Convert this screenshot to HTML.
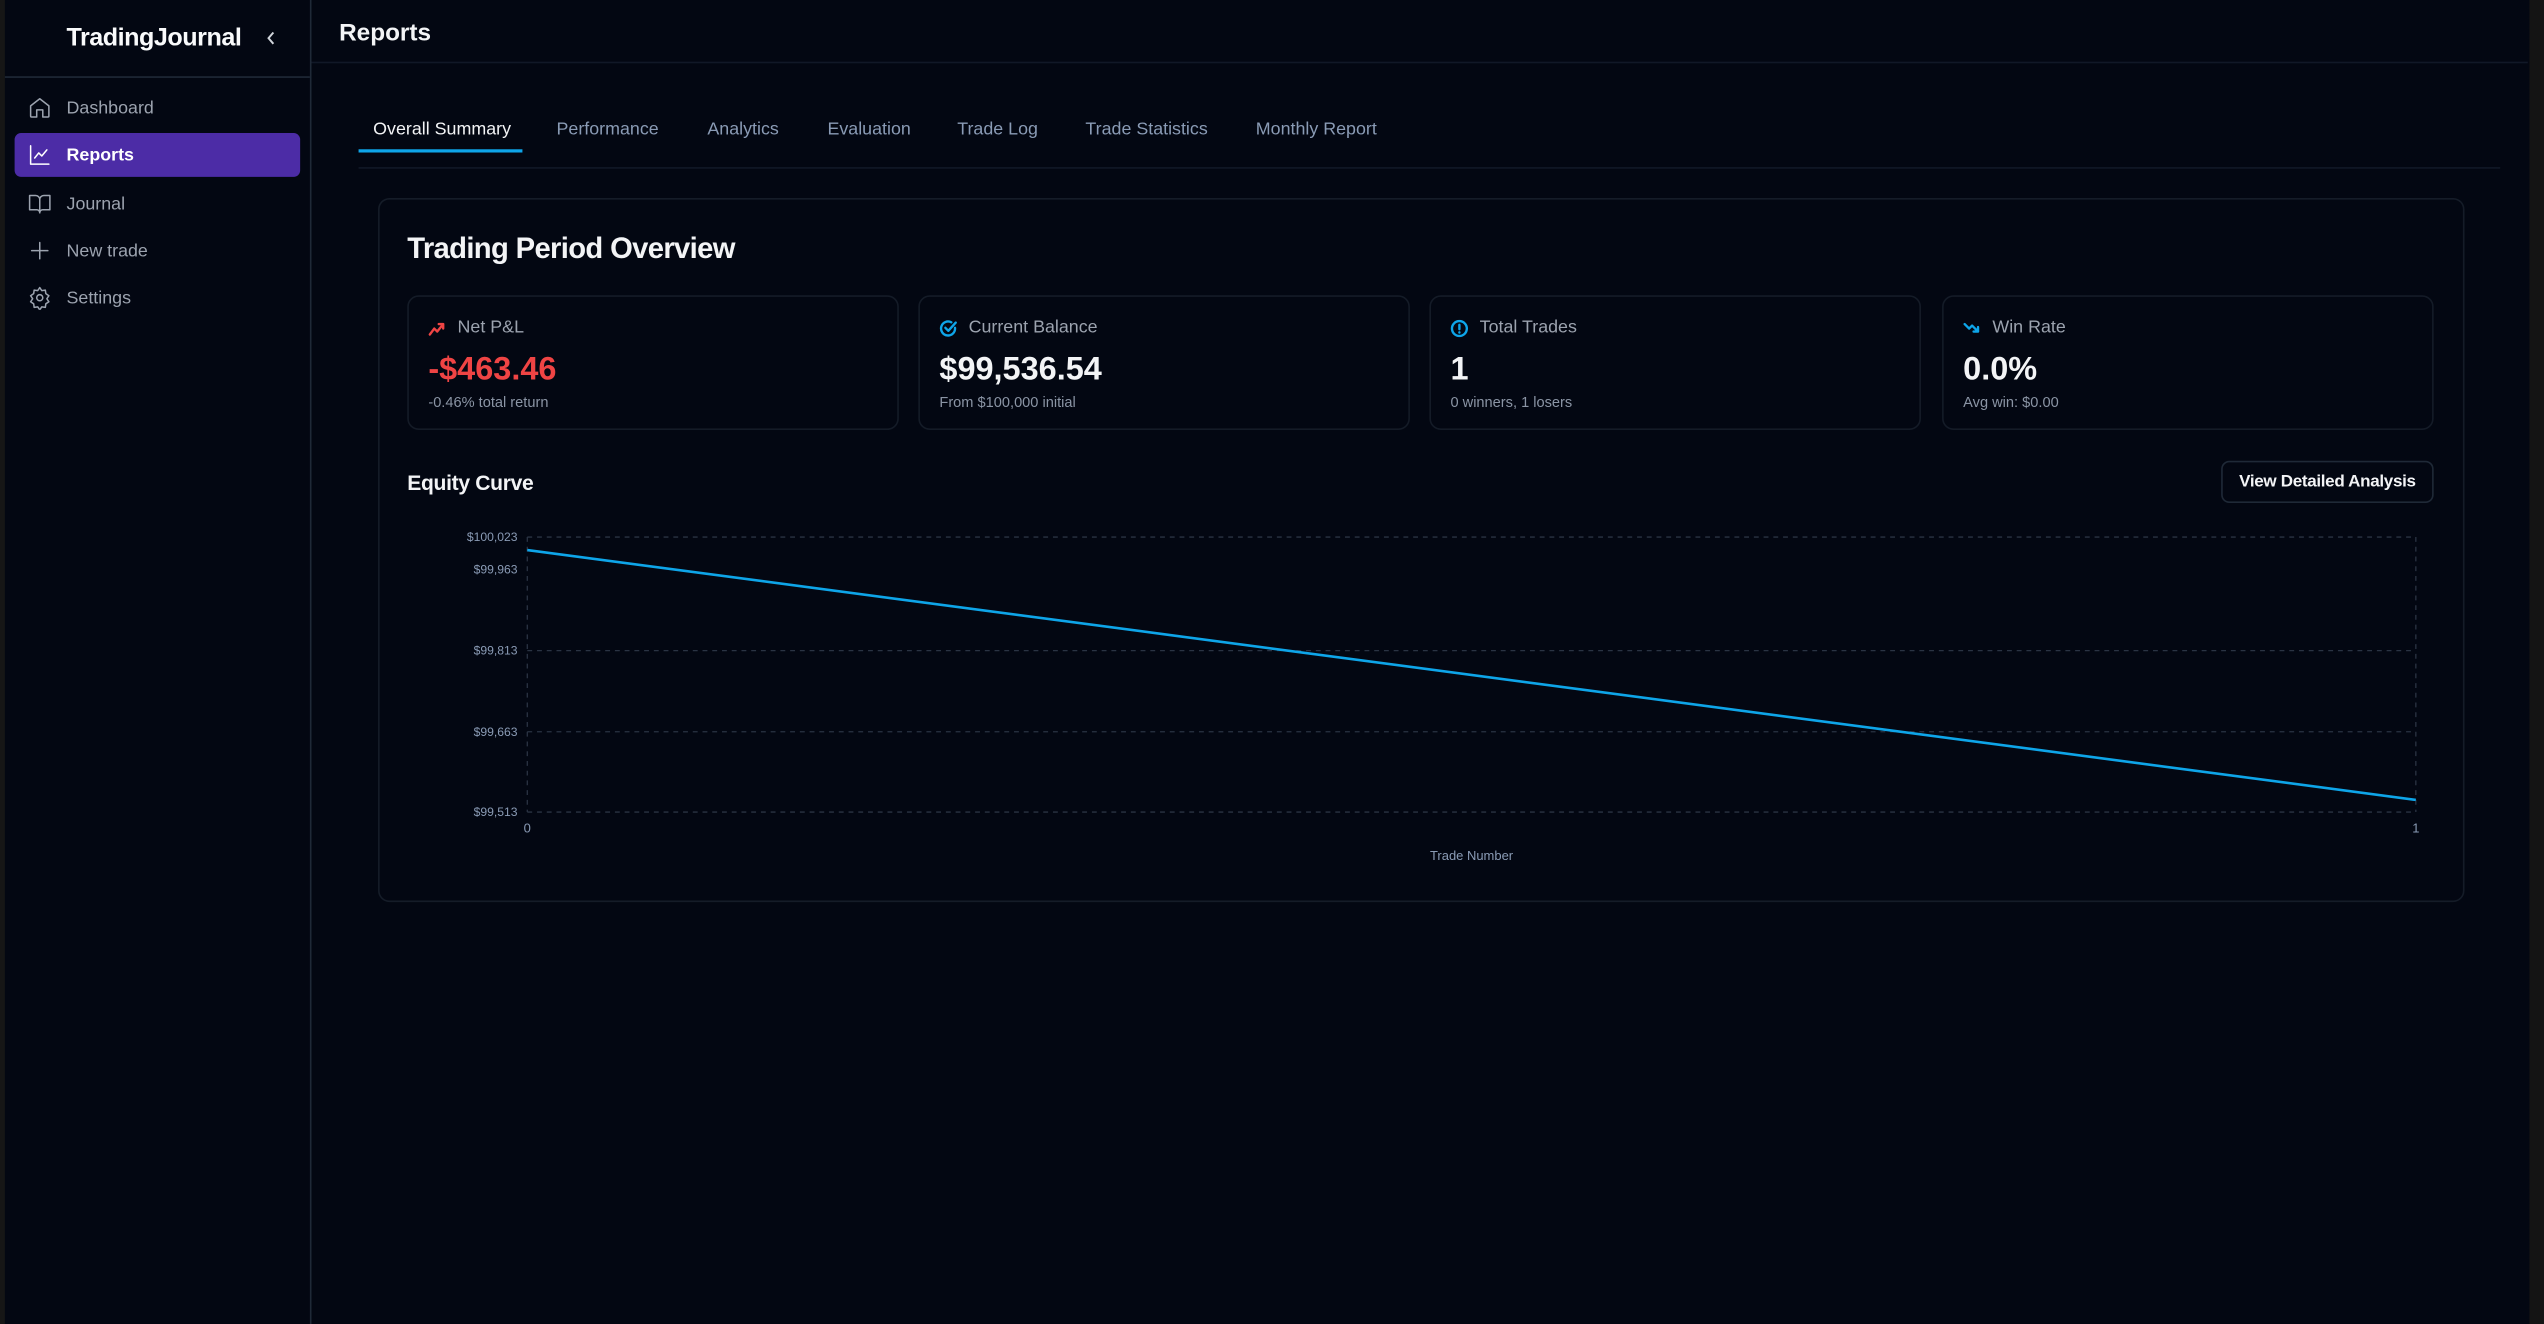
<!DOCTYPE html>
<html><head><meta charset="utf-8"><style>
*{box-sizing:border-box;margin:0;padding:0}
html,body{width:2544px;height:1324px;overflow:hidden;background:#030712}
#w{position:absolute;left:0;top:0;width:1568px;height:816px;transform:scale(1.62245,1.6225);transform-origin:0 0;font-family:"Liberation Sans",Arial,sans-serif;color:#f3f4f6;background:#030712}
.a{position:absolute}
.sb{left:0;top:0;width:192px;height:816px;border-right:1px solid #1f2937;border-left:3px solid #161616}
.nav{left:9px;width:176px;height:27px;border-radius:4px;font-size:11px;color:#9ca3af;display:flex;align-items:center;padding-left:8px}
.nav svg{width:15px;height:15px;margin-right:9px;fill:none;stroke:currentColor;stroke-width:1.5;stroke-linecap:round;stroke-linejoin:round}
.tab{top:73.5px;font-size:11px;color:#8a9bb5}
.card{border:1px solid #141b27;border-radius:7px;background:#030712}
.sc{top:182px;width:303px;height:83px}
.lbl{position:absolute;left:12px;top:13px;font-size:11px;color:#9ca3af;display:flex;align-items:center}
.lbl svg{width:11px;height:11px;margin-right:7px;fill:none;stroke-width:1.6;stroke-linecap:round;stroke-linejoin:round}
.val{position:absolute;left:12px;top:34px;font-size:20px;font-weight:bold;color:#f3f4f6}
.sub{position:absolute;left:12px;top:60px;font-size:9px;color:#8b95a5}
</style></head><body><div id="w">
<div class="a sb"></div>
<div class="a" style="left:41px;top:15px;font-size:15.5px;font-weight:bold;color:#f9fafb;letter-spacing:-0.3px">TradingJournal</div>
<svg class="a" style="left:163px;top:19px" width="8" height="9" viewBox="0 0 8 9"><path d="M5.5 1 L2.5 4.5 L5.5 8" stroke="#d1d5db" stroke-width="1.2" fill="none"/></svg>
<div class="a" style="left:3px;top:47px;width:188px;height:1px;background:#1f2937"></div>
<div class="a nav" style="top:53px"><svg viewBox="0 0 24 24"><path d="M3 10l9-7 9 7v10a1 1 0 0 1-1 1h-5v-7h-6v7H4a1 1 0 0 1-1-1z"/></svg>Dashboard</div>
<div class="a nav" style="top:82px;background:#4c2ca6;color:#fff;font-weight:bold"><svg viewBox="0 0 24 24"><path d="M3 3v18h18"/><path d="M7 15l4-5 3 3 5-6"/></svg>Reports</div>
<div class="a nav" style="top:112px"><svg viewBox="0 0 24 24"><path d="M2 4h6a4 4 0 0 1 4 4v13a3 3 0 0 0-3-3H2z"/><path d="M22 4h-6a4 4 0 0 0-4 4v13a3 3 0 0 1 3-3h7z"/></svg>Journal</div>
<div class="a nav" style="top:141px"><svg viewBox="0 0 24 24"><path d="M12 4v16M4 12h16"/></svg>New trade</div>
<div class="a nav" style="top:170px"><svg viewBox="0 0 24 24"><circle cx="12" cy="12" r="3"/><path d="M12 2l2 3 3.5-.5.5 3.5 3 2-2 3 2 3-3 2-.5 3.5-3.5-.5-2 3-2-3-3.5.5-.5-3.5-3-2 2-3-2-3 3-2 .5-3.5 3.5.5z"/></svg>Settings</div>

<div class="a" style="left:209px;top:12px;font-size:15px;font-weight:bold;color:#f3f4f6">Reports</div>
<div class="a" style="left:192px;top:38px;width:1366px;height:1px;background:#111827"></div>

<div class="a tab" style="left:230px;color:#f3f4f6">Overall Summary</div>
<div class="a" style="left:221px;top:92px;width:101px;height:2px;background:#0ea5e9"></div>
<div class="a tab" style="left:343px">Performance</div>
<div class="a tab" style="left:436px">Analytics</div>
<div class="a tab" style="left:510px">Evaluation</div>
<div class="a tab" style="left:590px">Trade Log</div>
<div class="a tab" style="left:669px">Trade Statistics</div>
<div class="a tab" style="left:774px">Monthly Report</div>
<div class="a" style="left:221px;top:103px;width:1320px;height:1px;background:#111827"></div>

<div class="a card" style="left:233px;top:122px;width:1286px;height:434px;border-color:#151c28"></div>
<div class="a" style="left:251px;top:143px;font-size:18px;font-weight:bold;color:#f3f4f6;letter-spacing:-0.4px">Trading Period Overview</div>

<div class="a card sc" style="left:251px"><div class="lbl"><svg viewBox="0 0 12 12" stroke="#ef4444"><path d="M1 10l3-4 2 2 4-5M7 3h3v3"/></svg>Net P&amp;L</div><div class="val" style="color:#ef4444">-$463.46</div><div class="sub">-0.46% total return</div></div>
<div class="a card sc" style="left:566px"><div class="lbl"><svg viewBox="0 0 12 12" stroke="#0ea5e9"><path d="M10.5 5.5A4.7 4.7 0 1 1 8 1.8"/><path d="M4 5.5l2 2 5-5.5"/></svg>Current Balance</div><div class="val">$99,536.54</div><div class="sub">From $100,000 initial</div></div>
<div class="a card sc" style="left:881px"><div class="lbl"><svg viewBox="0 0 12 12" stroke="#0ea5e9"><circle cx="6" cy="6" r="5"/><path d="M6 3.5v3M6 8.5v.2"/></svg>Total Trades</div><div class="val">1</div><div class="sub">0 winners, 1 losers</div></div>
<div class="a card sc" style="left:1197px"><div class="lbl"><svg viewBox="0 0 12 12" stroke="#0ea5e9"><path d="M1 3l3 3 2-2 4 4M10 5v3H7"/></svg>Win Rate</div><div class="val">0.0%</div><div class="sub">Avg win: $0.00</div></div>

<div class="a" style="left:251px;top:290px;font-size:13px;font-weight:bold;color:#f3f4f6;letter-spacing:-0.2px">Equity Curve</div>
<div class="a" style="left:1369px;top:284px;width:131px;height:26px;border:1px solid #1f2937;border-radius:5px;font-size:10.5px;font-weight:bold;color:#f3f4f6;display:flex;align-items:center;justify-content:center;letter-spacing:-0.2px">View Detailed Analysis</div>

<svg class="a" style="left:0;top:0" width="1568" height="816">
<g stroke="#2a3343" stroke-width="0.8" stroke-dasharray="3 3" fill="none">
<path d="M325 331H1489M325 401H1489M325 451H1489M325 500.5H1489M325 331V500.5M1489 331V500.5"/>
</g>
<path d="M325 339L1489 493" stroke="#0ea5e9" stroke-width="1.6" fill="none"/>
<g font-family="Liberation Sans, Arial, sans-serif" font-size="7.5" fill="#8a9bb5" text-anchor="end">
<text x="319" y="333.5">$100,023</text><text x="319" y="353.5">$99,963</text><text x="319" y="403.5">$99,813</text><text x="319" y="453.5">$99,663</text><text x="319" y="503">$99,513</text>
</g>
<g font-family="Liberation Sans, Arial, sans-serif" font-size="8" fill="#8a9bb5" text-anchor="middle">
<text x="325" y="513">0</text><text x="1489" y="513">1</text><text x="907" y="530">Trade Number</text>
</g>
</svg>
<div class="a" style="left:1559px;top:0;width:9px;height:816px;background:#141414"></div>
</div></body></html>
